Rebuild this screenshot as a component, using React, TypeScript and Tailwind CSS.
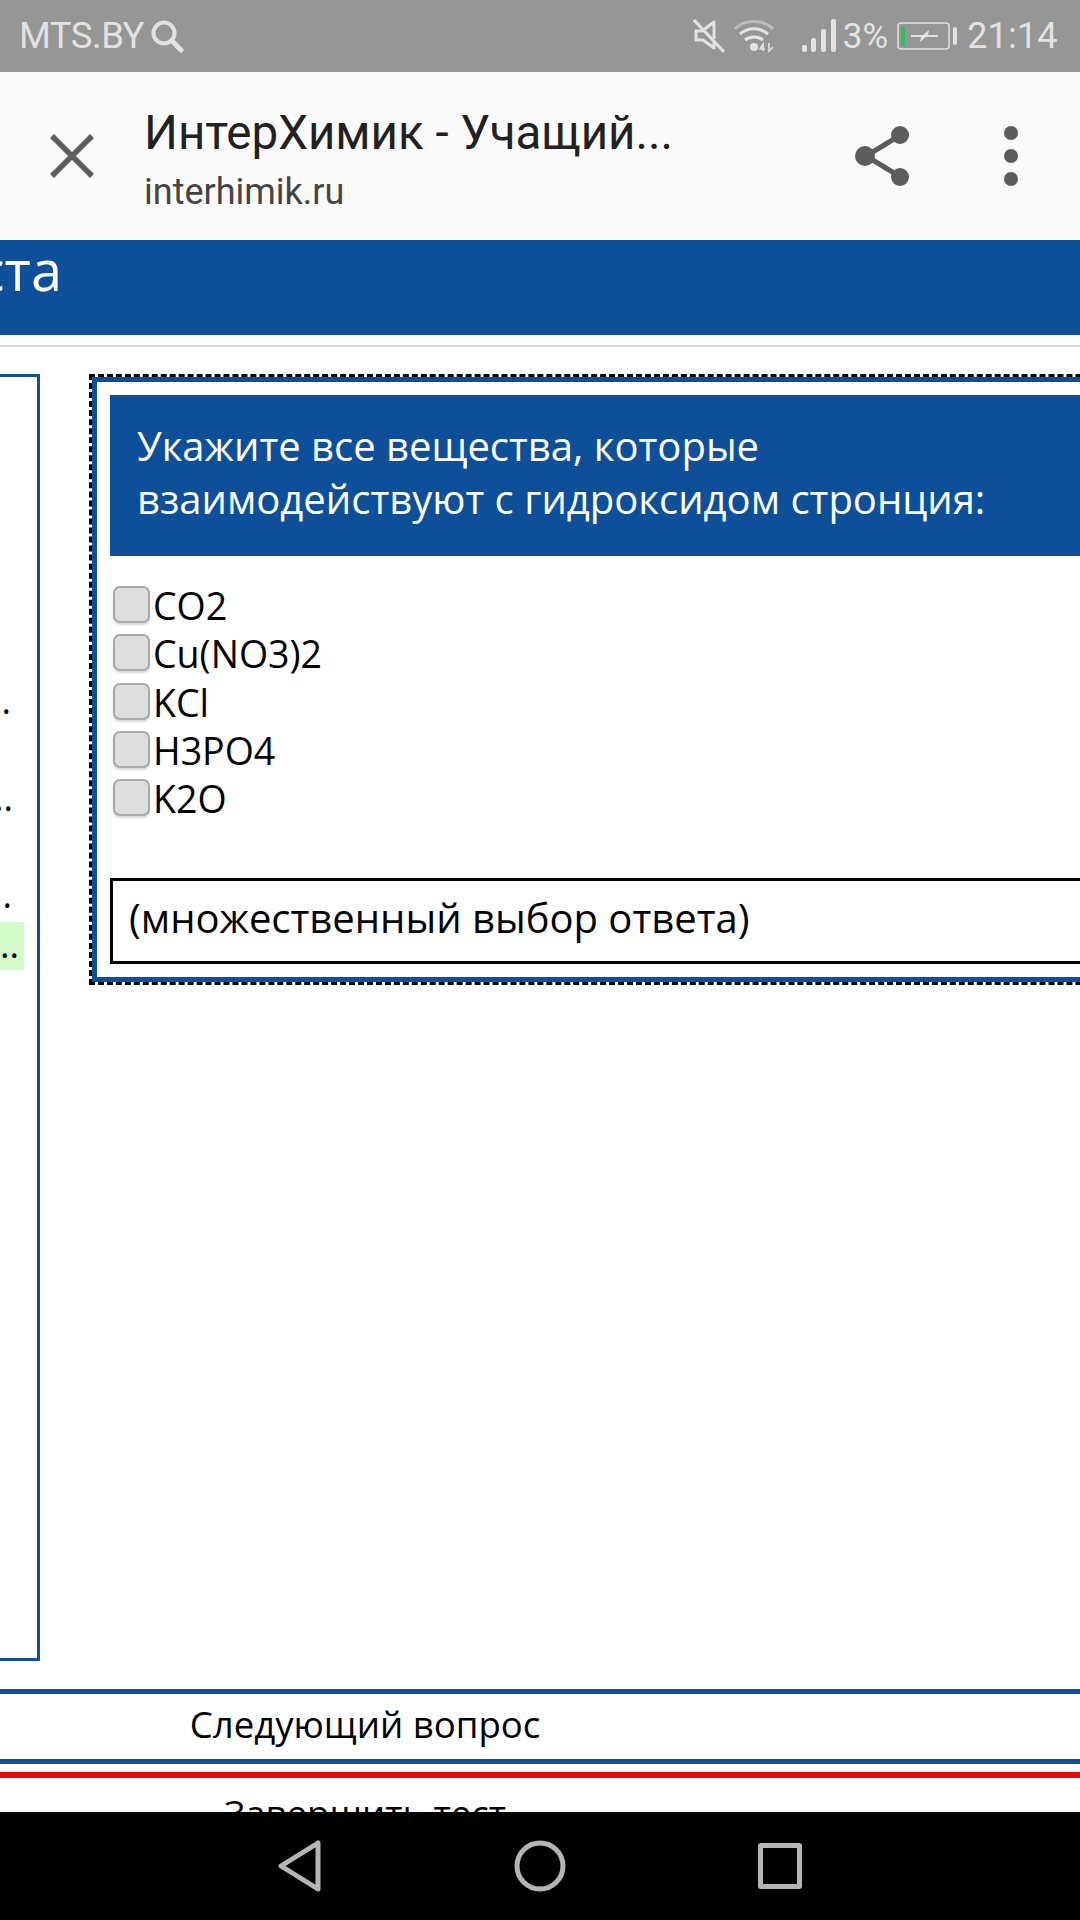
const options = ["CO2", "Cu(NO3)2", "KCl", "H3PO4", "K2O"];

function StatusBar() {
  return (
    <div className="flex h-[72px] shrink-0 items-center bg-[#969696] pl-[19px] font-['Roboto',sans-serif] text-[#e2e2e2]">
      <span className="text-[36.5px] leading-none tracking-[-0.5px]">MTS.BY</span>
      <svg className="ml-[6px]" width="34" height="34" viewBox="0 0 34 34" fill="none" stroke="#e2e2e2">
        <circle cx="14" cy="14" r="10.5" strokeWidth="4" />
        <path d="M22 22l9 9" strokeWidth="5" strokeLinecap="round" />
      </svg>
      <svg className="ml-[509px]" width="32" height="34" viewBox="0 0 32 34" fill="none" stroke="#e2e2e2" strokeWidth="3">
        <path d="M2 12h7l12-9v17M3 11v10h7l11 8v-6" strokeLinejoin="round" />
        <path d="M1 1l30 32" />
      </svg>
      <svg className="ml-[9px]" width="40" height="34" viewBox="0 0 40 34" fill="none" stroke="#e2e2e2">
        <path d="M1 10C10 0 30 0 39 10" strokeWidth="3" opacity=".5" />
        <path d="M6 15c8-7 20-7 28 0" strokeWidth="3" />
        <path d="M11 21c5-4 13-4 18 0" strokeWidth="3" />
        <circle cx="20" cy="28" r="4" fill="#e2e2e2" stroke="none" />
        <path d="M29 32v-7l-3 5h5M35 24v8l4-4" strokeWidth="1.6" />
      </svg>
      <svg className="ml-[28px]" width="34" height="34" viewBox="0 0 34 34" fill="#e2e2e2">
        <rect x="0" y="26" width="5" height="7" rx="2" />
        <rect x="9" y="19" width="5" height="14" rx="2" />
        <rect x="19" y="10" width="5" height="23" rx="2" />
        <rect x="29" y="0" width="5" height="33" rx="2" />
      </svg>
      <span className="ml-[7px] text-[35px] leading-none">3%</span>
      <svg className="ml-[9px]" width="60" height="30" viewBox="0 0 60 30" fill="none">
        <rect x="1" y="2" width="51" height="26" rx="3" stroke="#e2e2e2" strokeWidth="1.5" />
        <rect x="4" y="6" width="4" height="19" fill="#22c55e" />
        <path d="M14 14h12l6-5-1 5h10v2H29l-6 5 1-5H14z" fill="#e2e2e2" />
        <rect x="56" y="6" width="4" height="18" rx="2" fill="#e2e2e2" />
      </svg>
      <span className="ml-[10px] text-[36px] leading-none tracking-[0.2px]">21:14</span>
    </div>
  );
}

function Toolbar() {
  return (
    <div className="flex h-[168px] shrink-0 items-center bg-[#fafafa] font-['Roboto',sans-serif]">
      <svg className="ml-[50px]" width="44" height="44" viewBox="0 0 44 44" stroke="#5c5c5c" strokeWidth="5.5">
        <path d="M2 2l40 40M42 2L2 42" />
      </svg>
      <div className="ml-[50px] flex w-[680px] flex-col pt-[5px]">
        <span className="text-[47.5px] leading-[54px] text-[#212121]">ИнтерХимик - Учащий...</span>
        <span className="mt-[12px] text-[36px] leading-[40px] text-[#444444]">interhimik.ru</span>
      </div>
      <svg className="ml-[31px]" width="56" height="62" viewBox="0 0 56 62" fill="#5c5c5c" stroke="#5c5c5c">
        <path d="M44 11L11 31l33 20" fill="none" strokeWidth="5" />
        <circle cx="45" cy="10" r="9" stroke="none" />
        <circle cx="10" cy="31" r="10" stroke="none" />
        <circle cx="45" cy="52" r="9" stroke="none" />
      </svg>
      <div className="ml-[93px] flex flex-col gap-[9px]">
        <div className="size-[14px] rounded-full bg-[#5c5c5c]" />
        <div className="size-[14px] rounded-full bg-[#5c5c5c]" />
        <div className="size-[14px] rounded-full bg-[#5c5c5c]" />
      </div>
    </div>
  );
}

function LeftPanel() {
  return (
    <div className="h-[1287px] w-[40px] shrink-0 overflow-hidden border-y-[3px] border-r-[3px] border-[#0d5099] text-[36px] text-black">
      <div className="flex h-[344px] items-end justify-end pr-[26px] leading-[40px]">.</div>
      <div className="flex h-[97px] items-end justify-end pr-[24px] leading-[40px]">..</div>
      <div className="flex h-[97px] items-end justify-end pr-[25px] leading-[40px]">.</div>
      <div className="mt-[7px] flex h-[48px] w-[24px] items-end justify-end bg-[#d3fbc9] pb-[10px] pr-[5px] leading-[30px]">..</div>
    </div>
  );
}

function QuestionBox() {
  return (
    <div className="ml-[49px] h-[611px] w-[1100px] shrink-0 border-[3px] border-dashed border-black">
      <div className="h-full border-[5px] border-[#0d5099] bg-white pl-[13px] pt-[13px]">
        <div className="flex h-[161px] flex-col justify-center bg-[#0d5099] pb-[7px] pl-[27px] text-[40px] leading-[53px] text-white">
          <p>Укажите все вещества, которые</p>
          <p>взаимодействуют с гидроксидом стронция:</p>
        </div>
        <div className="mt-[30px] flex flex-col pl-[3px]">
          {options.map((opt) => (
            <label key={opt} className="flex h-[48.3px] items-start text-[37.5px] leading-[48px] text-black">
              <span className="h-[37px] w-[37px] shrink-0 rounded-[7px] border-[2.5px] border-[#a9a9a9] bg-[#dedede] shadow-[0_2px_2px_#d8d8d8]" />
              <span className="ml-[3px] mt-[-4px]">{opt}</span>
            </label>
          ))}
        </div>
        <div className="mt-[51px] flex h-[86px] items-center border-[3px] border-black pb-[6px] pl-[16px] text-[40px] text-black">
          (множественный выбор ответа)
        </div>
      </div>
    </div>
  );
}

function BottomButtons() {
  return (
    <div className="mt-[28px] flex flex-col text-[36.6px] text-black">
      <div className="flex h-[75px] w-[1080px] items-center border-y-[5px] border-[#0d5099] pb-[4px]">
        <span className="w-[730px] text-center">Следующий вопрос</span>
      </div>
      <div className="mt-[8px] h-[41px] overflow-hidden border-t-[6px] border-[#e60c0c] pt-[10px] leading-[50px]">
        <p className="w-[730px] text-center">Завершить тест</p>
      </div>
    </div>
  );
}

function NavBar() {
  return (
    <div className="flex h-[108px] shrink-0 items-center bg-black pl-[278px]">
      <svg width="44" height="52" viewBox="0 0 44 52" fill="none" stroke="#b5b5b5" strokeWidth="5" strokeLinejoin="round">
        <path d="M40 3v46L3 26z" />
      </svg>
      <svg className="ml-[192px]" width="52" height="52" viewBox="0 0 52 52" fill="none" stroke="#b5b5b5" strokeWidth="5">
        <circle cx="26" cy="26" r="23" />
      </svg>
      <div className="ml-[192px] h-[46px] w-[44px] rounded-[3px] border-[5px] border-[#b5b5b5]" />
    </div>
  );
}

export default function App() {
  return (
    <div className="flex h-[1920px] w-[1080px] flex-col overflow-hidden bg-white font-['Open_Sans',sans-serif]">
      <StatusBar />
      <Toolbar />
      <div className="h-[95px] shrink-0 bg-[#0d5099]">
        <div className="flex h-[58px] w-[62px] items-center justify-end overflow-hidden text-[56px] leading-none text-white">
          <span>теста</span>
        </div>
      </div>
      <div className="mt-[10px] h-[2px] shrink-0 bg-[#cfdbe3]" />
      <div className="flex min-h-0 flex-1 flex-col overflow-hidden">
        <div className="mt-[27px] flex">
          <LeftPanel />
          <QuestionBox />
        </div>
        <BottomButtons />
      </div>
      <NavBar />
    </div>
  );
}
